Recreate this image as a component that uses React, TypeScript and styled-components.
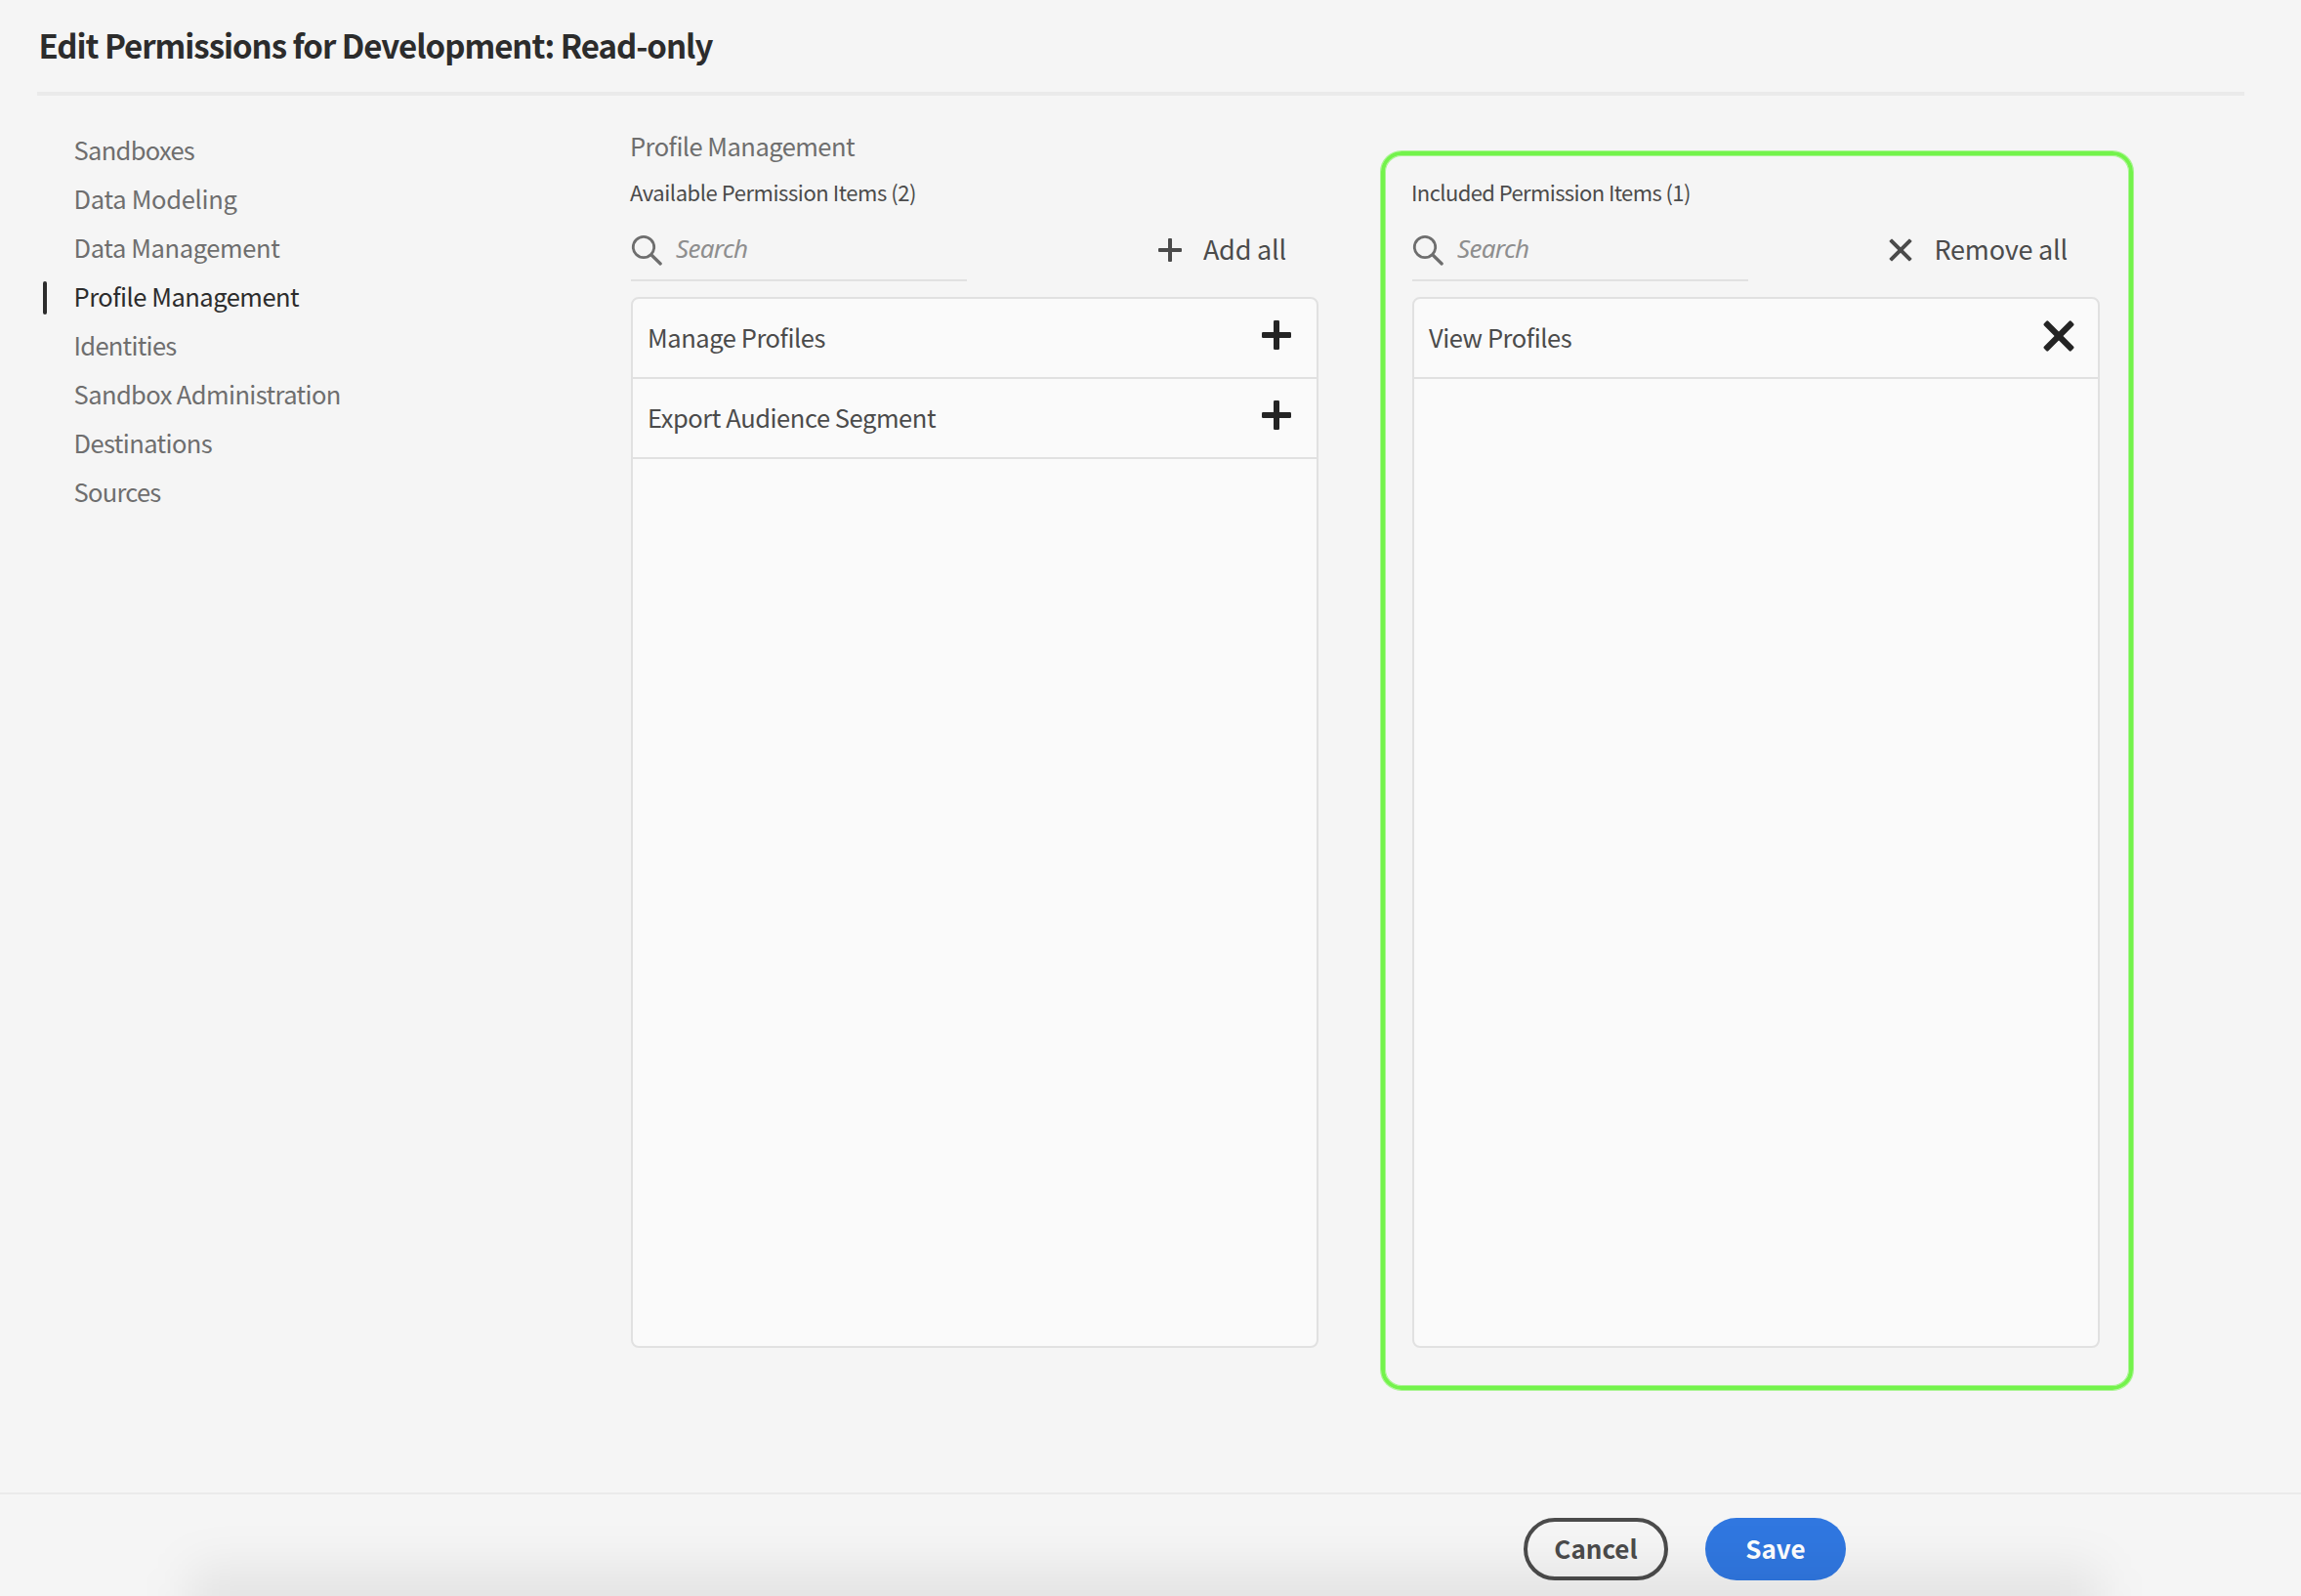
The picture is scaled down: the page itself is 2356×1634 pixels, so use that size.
import React from "react";
import styled, { createGlobalStyle, css } from "styled-components";

const GlobalStyle = createGlobalStyle`
  *, *::before, *::after { box-sizing: border-box; }
  body {
    margin: 0;
    background: #f5f5f5;
    font-family: "Noto Sans CJK SC", "Noto Sans", sans-serif;
    color: #4b4b4b;
  }
`;

const Page = styled.div`
  width: 2356px;
  height: 1634px;
  display: flex;
  flex-direction: column;
  overflow: hidden;
  background: #f5f5f5;
`;

const Header = styled.header`
  height: 76px;
  margin: 22px 58px 0 38px;
  border-bottom: 4px solid #eaeaea;
`;

const Title = styled.h1`
  margin: 0;
  padding-left: 1.5px;
  font-size: 33px;
  line-height: 48px;
  font-weight: 700;
  letter-spacing: -1.03px;
  color: #2c2c2c;
  white-space: nowrap;
`;

const Body = styled.main`
  flex: 1;
  display: flex;
  align-items: flex-start;
`;

const Nav = styled.nav`
  width: 644px;
  padding: 30px 0 0 44px;
  display: flex;
  flex-direction: column;
`;

const NavItem = styled.a<{ $active?: boolean; $tracking: number }>`
  display: flex;
  align-items: center;
  height: 50px;
  font-size: 25.5px;
  line-height: 50px;
  letter-spacing: ${(p) => p.$tracking}px;
  color: ${(p) => (p.$active ? "#2c2c2c" : "#6e6e6e")};

  &::before {
    content: "";
    width: 4px;
    height: 34px;
    margin: 4px 27.6px 0 0;
    border-radius: 2px;
    background: ${(p) => (p.$active ? "#2c2c2c" : "transparent")};
  }
`;

const AvailableColumn = styled.section`
  width: 706px;
  padding-top: 31px;
`;

const IncludedColumn = styled.section`
  width: 770px;
  height: 1268px;
  margin: 57px 0 0 64px;
  padding: 22px 30px 0 26px;
  border: 4px solid #73f34b;
  border-radius: 21px;
  box-shadow: 0 0 0 1px #a9f491, inset 0 0 0 1px #a9f491;
`;

const SectionName = styled.h2`
  margin: 0 0 12px;
  padding-left: 1px;
  font-size: 25.5px;
  line-height: 40px;
  font-weight: 400;
  letter-spacing: -0.53px;
  color: #6e6e6e;
`;

const ListTitle = styled.h3<{ $tracking: number }>`
  margin: 0 0 12px;
  padding-left: 1px;
  font-size: 22px;
  line-height: 31px;
  font-weight: 400;
  letter-spacing: ${(p) => p.$tracking}px;
  color: #4b4b4b;
`;

const Toolbar = styled.div`
  display: flex;
  justify-content: space-between;
  height: 64px;
  margin: 0 0 16px 2px;
`;

const SearchField = styled.label`
  display: flex;
  align-items: center;
  gap: 14px;
  width: 344px;
  border-bottom: 2px solid #e1e1e1;

  svg { flex: none; margin-top: 2px; }
`;

const Placeholder = styled.span`
  padding-bottom: 2px;
  font-family: "Noto Sans", sans-serif;
  font-style: italic;
  font-size: 26px;
  line-height: 36px;
  letter-spacing: -0.7px;
  color: #8e8e8e;
`;

const QuietButton = styled.button`
  display: flex;
  align-items: center;
  gap: 22px;
  height: 64px;
  padding: 0 33px 0 0;
  border: 0;
  background: none;
  font: 400 27px/40px "Noto Sans CJK SC", sans-serif;
  letter-spacing: -0.2px;
  color: #4b4b4b;

  span { padding-bottom: 2px; }
`;

const Card = styled.ul`
  height: 1076px;
  margin: 0 0 0 2px;
  padding: 0;
  list-style: none;
  border: 2px solid #e1e1e1;
  border-radius: 8px;
  background: #fafafa;
`;

const Row = styled.li`
  display: flex;
  align-items: center;
  justify-content: space-between;
  height: 82px;
  padding: 0 20px 2px 15px;
  border-bottom: 2px solid #e1e1e1;
  font-size: 25.5px;
  line-height: 40px;
  letter-spacing: -0.44px;
  color: #4b4b4b;

  svg { margin-bottom: 4px; color: #242424; }
`;

const Footer = styled.footer`
  position: relative;
  display: flex;
  justify-content: flex-end;
  align-items: flex-start;
  gap: 38px;
  height: 106px;
  padding: 24px 466px 0 0;
  border-top: 2px solid #eaeaea;
  overflow: hidden;

  &::after {
    content: "";
    position: absolute;
    left: 193px;
    right: 205px;
    top: 74px;
    height: 200px;
    border-radius: 16px;
    background: rgba(0, 0, 0, 0.066);
    filter: blur(24px);
    pointer-events: none;
  }
`;

const pill = css`
  height: 64px;
  padding: 0 0 3px;
  border-radius: 32px;
  font: 700 26px/36px "Noto Sans CJK SC", sans-serif;
`;

const CancelButton = styled.button`
  ${pill}
  width: 148px;
  border: 4px solid #4b4b4b;
  background: none;
  color: #4b4b4b;
`;

const SaveButton = styled.button`
  ${pill}
  width: 144px;
  border: 0;
  background: #3077e0;
  color: #ffffff;
`;

const SearchIcon = () => (
  <svg width="32" height="32" viewBox="0 0 32 32" fill="none" stroke="#6e6e6e">
    <circle cx="13" cy="13" r="10.7" strokeWidth="2.8" />
    <path d="M21 21 30.2 30" strokeWidth="3.2" strokeLinecap="round" />
  </svg>
);

const PlusIcon = () => (
  <svg width="24" height="24" viewBox="0 0 24 24" fill="currentColor">
    <rect x="0" y="10" width="24" height="4" rx="1" />
    <rect x="10" y="0" width="4" height="24" rx="1" />
  </svg>
);

const CrossIcon = () => (
  <svg width="24" height="24" viewBox="-12 -12 24 24" fill="currentColor">
    <rect x="-14.7" y="-2" width="29.4" height="4" rx="1" transform="rotate(45)" />
    <rect x="-14.7" y="-2" width="29.4" height="4" rx="1" transform="rotate(-45)" />
  </svg>
);

const BoldPlusIcon = () => (
  <svg width="40" height="40" viewBox="0 0 40 40" fill="currentColor">
    <rect x="4" y="17" width="30" height="6" rx="1.2" />
    <rect x="16" y="5" width="6" height="30" rx="1.2" />
  </svg>
);

const BoldCrossIcon = () => (
  <svg width="40" height="40" viewBox="-20 -21 40 40" fill="currentColor">
    <rect x="-19.7" y="-3.1" width="39.4" height="6.2" rx="1.4" transform="rotate(45)" />
    <rect x="-19.7" y="-3.1" width="39.4" height="6.2" rx="1.4" transform="rotate(-45)" />
  </svg>
);

const sections = [
  { name: "Sandboxes", tracking: -0.72 },
  { name: "Data Modeling", tracking: -0.3 },
  { name: "Data Management", tracking: -0.38 },
  { name: "Profile Management", tracking: -0.5 },
  { name: "Identities", tracking: -0.74 },
  { name: "Sandbox Administration", tracking: -0.6 },
  { name: "Destinations", tracking: -0.6 },
  { name: "Sources", tracking: -0.75 },
];

const available = ["Manage Profiles", "Export Audience Segment"];
const included = ["View Profiles"];

const Search = () => (
  <SearchField>
    <SearchIcon />
    <Placeholder>Search</Placeholder>
  </SearchField>
);

export default function App() {
  return (
    <>
      <GlobalStyle />
      <Page>
        <Header>
          <Title>Edit Permissions for Development: Read-only</Title>
        </Header>
        <Body>
          <Nav>
            {sections.map(({ name, tracking }) => (
              <NavItem key={name} $active={name === "Profile Management"} $tracking={tracking}>
                {name}
              </NavItem>
            ))}
          </Nav>
          <AvailableColumn>
            <SectionName>Profile Management</SectionName>
            <ListTitle $tracking={-0.44}>Available Permission Items ({available.length})</ListTitle>
            <Toolbar>
              <Search />
              <QuietButton>
                <PlusIcon />
                <span>Add all</span>
              </QuietButton>
            </Toolbar>
            <Card>
              {available.map((name) => (
                <Row key={name}>
                  {name}
                  <BoldPlusIcon />
                </Row>
              ))}
            </Card>
          </AvailableColumn>
          <IncludedColumn>
            <ListTitle $tracking={-0.6}>Included Permission Items ({included.length})</ListTitle>
            <Toolbar>
              <Search />
              <QuietButton>
                <CrossIcon />
                <span>Remove all</span>
              </QuietButton>
            </Toolbar>
            <Card>
              {included.map((name) => (
                <Row key={name}>
                  {name}
                  <BoldCrossIcon />
                </Row>
              ))}
            </Card>
          </IncludedColumn>
        </Body>
        <Footer>
          <CancelButton>Cancel</CancelButton>
          <SaveButton>Save</SaveButton>
        </Footer>
      </Page>
    </>
  );
}
